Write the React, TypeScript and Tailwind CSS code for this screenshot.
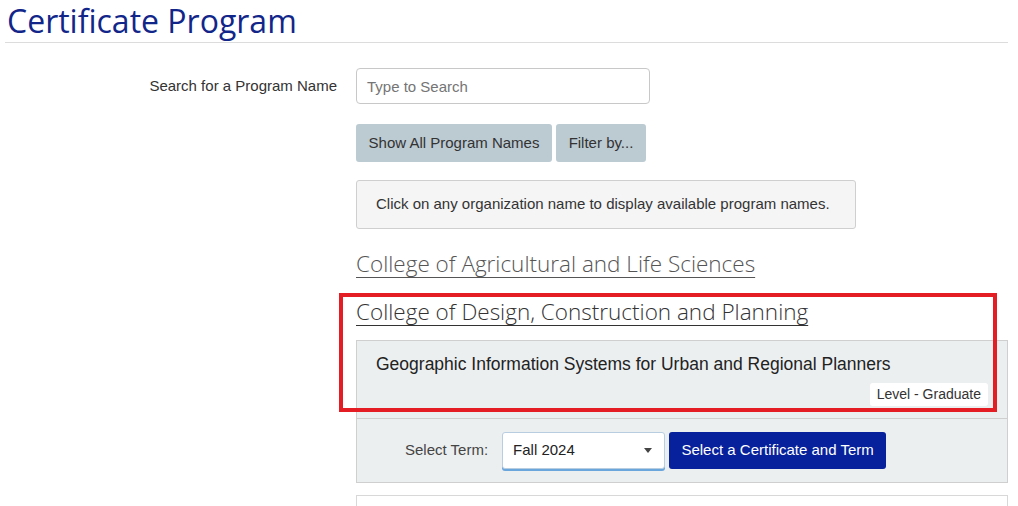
const sans = { fontFamily: '"Liberation Sans", Arial, sans-serif' };

const App = () => {
  return (
    <div className="bg-white w-[1018px] h-[506px] overflow-hidden font-['Liberation_Sans',Arial,sans-serif] text-[#333]">
      <div className="px-[5px]">
        <h1 className="font-['Open_Sans',sans-serif] text-[32px] leading-[42px] text-[#12268a] pl-[2px]">
          Certificate Program
        </h1>
        <div className="w-[1003px] border-t border-[#dcdcdc]" />
      </div>

      <div className="flex mt-[25px]">
        <div className="w-[337px] shrink-0 text-right text-[15px] pt-[9px] leading-[18px]">
          Search for a Program Name
        </div>
        <div className="ml-[19px] w-[652px] flex flex-col">
          <input
            type="text"
            placeholder="Type to Search"
            className="w-[294px] h-[36px] border border-[#c8c8c8] rounded-[4px] px-[10px] text-[15px] placeholder:text-[#757575] outline-none"
            style={sans}
          />
          <div className="flex gap-[4px] mt-[20px]">
            <button className="h-[38px] w-[196px] bg-[#bccad2] rounded-[3px] text-[15px] text-[#333]">
              Show All Program Names
            </button>
            <button className="h-[38px] w-[90px] bg-[#bccad2] rounded-[3px] text-[15px] text-[#333]">
              Filter by...
            </button>
          </div>
          <div className="mt-[18px] w-[500px] h-[49px] bg-[#f5f5f5] border border-[#cfcfcf] rounded-[3px] flex items-center px-[19px] text-[15px]">
            Click on any organization name to display available program names.
          </div>

          <a className="mt-[18px] font-['Open_Sans',sans-serif] font-light text-[22.5px] leading-[34px] text-[#555] underline underline-offset-[5px] decoration-[1px] w-fit">
            College of Agricultural and Life Sciences
          </a>

          <div className="relative mt-[14px]">
            <a className="block font-['Open_Sans',sans-serif] font-light text-[22.5px] leading-[34px] text-[#333] underline underline-offset-[5px] decoration-[1px] w-fit">
              College of Design, Construction and Planning
            </a>
            <div className="mt-[11px] border border-[#cfcfcf] bg-[#eceff0]">
              <div className="h-[77px] px-[19px] pt-[13px] flex flex-col">
                <div className="text-[17.5px] leading-[20px] text-[#222]">
                  Geographic Information Systems for Urban and Regional Planners
                </div>
                <div className="self-end mt-[9px] bg-white rounded-[3px] px-[7px] h-[23px] flex items-center text-[14px] text-[#333]">
                  Level - Graduate
                </div>
              </div>
              <div className="border-t border-[#cfcfcf] h-[64px] flex items-center pl-[48px]">
                <span className="text-[15px] text-[#444]">Select Term:</span>
                <div className="ml-[14px] w-[163px] h-[37px] bg-white border border-[#b9cde0] rounded-[3px] shadow-[0_2px_0_#6aa6dc] flex items-center justify-between pl-[10px] pr-[12px]">
                  <span className="text-[15px] text-[#222]">Fall 2024</span>
                  <svg width="8" height="5" viewBox="0 0 8 5">
                    <path d="M0 0h8L4 5z" fill="#444" />
                  </svg>
                </div>
                <button className="ml-[4px] h-[37px] w-[217px] bg-[#06219b] rounded-[3px] text-white text-[15px]">
                  Select a Certificate and Term
                </button>
              </div>
            </div>
            <div className="absolute left-[-17px] top-[-2px] w-[658px] h-[119px] border-[4px] border-[#e41d25] pointer-events-none" />
          </div>

          <div className="mt-[12px] h-[40px] border border-[#d8d8d8]" />
        </div>
      </div>
    </div>
  );
};

export default App;
